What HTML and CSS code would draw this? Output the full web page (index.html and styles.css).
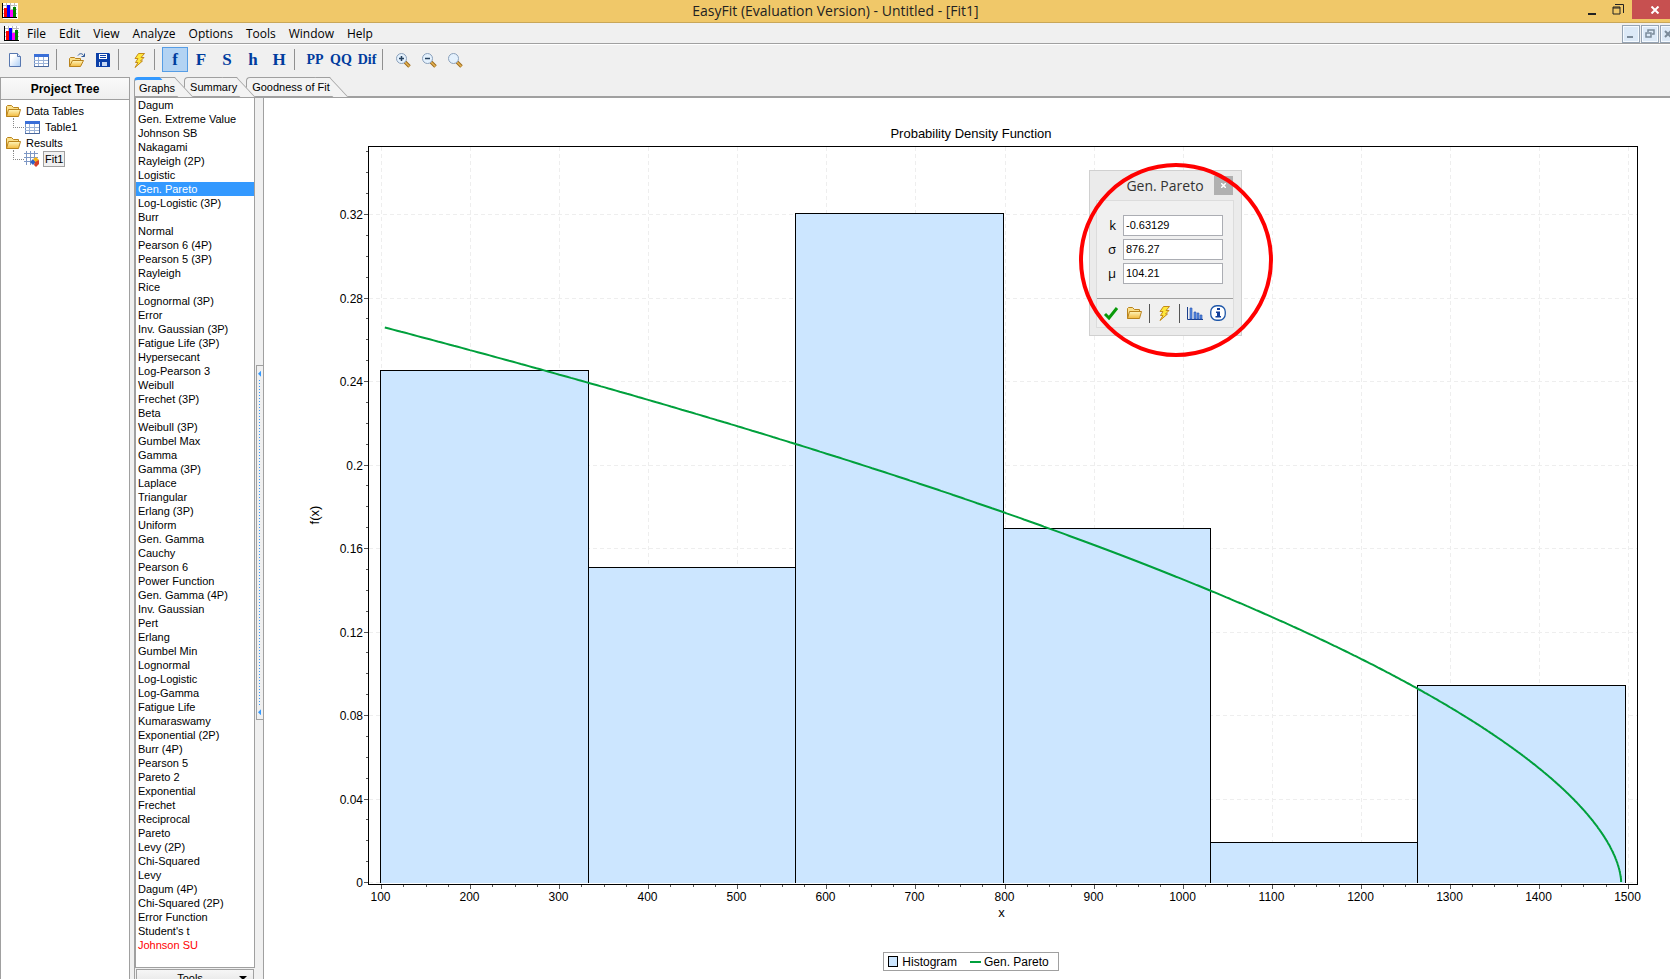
FILE: index.html
```
<!DOCTYPE html>
<html lang="en">
<head>
    <meta charset="UTF-8">
    <meta name="viewport" content="width=device-width, initial-scale=1.0">
    <title>EasyFit (Evaluation Version) - Untitled - [Fit1]</title>
    <link rel="stylesheet" href="styles.css">
</head>
<body>
    <!-- Shared icons -->
    <svg class="defs" aria-hidden="true">
        <defs>
            <linearGradient id="paper" x1="0" y1="0" x2="1" y2="1"><stop offset="0.3" stop-color="#fff"/><stop offset="1" stop-color="#a9ccf5"/></linearGradient>
            <linearGradient id="gold" x1="0" y1="0" x2="0" y2="1"><stop offset="0" stop-color="#fff6bd"/><stop offset="1" stop-color="#f2b93c"/></linearGradient>
            <symbol id="i-app" viewBox="0 0 16 16">
                <path d="M1 0h15v16H1z" fill="#fff"/>
                <path d="M1 2.500h14M1 6.500h14M1 10.500h14M4.500 0v14M8.500 0v14M12.500 0v14" stroke="#bbb"/>
                <path d="M2 5h3v9H2z" fill="#f00"/><path d="M5 2h3v12H5z" fill="#00f"/><path d="M8 7h3v7H8z" fill="#f0f"/><path d="M11 4h3v10h-3z" fill="#008000"/>
                <path d="M0 0h1v14h14v1H0z" fill="#000"/>
            </symbol>
            <symbol id="i-new" viewBox="0 0 16 16"><path d="M2.500 1.500h8l3 3v10h-11z" fill="url(#paper)" stroke="#5878b0"/><path d="M10.500 1.500v3h3" fill="#dfeaff" stroke="#5878b0"/></symbol>
            <symbol id="i-table" viewBox="0 0 16 16">
                <path d="M1.500 2.500h14v12h-14z" fill="#fff" stroke="#6f8fc4"/><path d="M1 2h15v3H1z" fill="#3a6fd8"/>
                <path d="M1 8.500h14M1 11.500h14M5.500 5v10M10.500 5v10" stroke="#9db4d8"/><path d="M1 14.500h14.500V5" fill="none" stroke="#49679c"/>
            </symbol>
            <symbol id="i-folder" viewBox="0 0 16 16">
                <path d="M1.500 13.500v-10l1-1h4l2 2h5v2" fill="#fbe08a" stroke="#b9831c"/>
                <path d="M1.500 13.500l2-7h12l-2 7z" fill="url(#gold)" stroke="#b9831c"/>
            </symbol>
            <symbol id="i-open" viewBox="0 0 18 16">
                <path d="M1.500 14.500v-8l1-1h4l1 1h5v2" fill="#fbe08a" stroke="#b9831c"/>
                <path d="M1.500 14.500l3-6h11l-3 6z" fill="url(#gold)" stroke="#b9831c"/>
                <path d="M10 3.500c2-3 5-2 6 1M13.500 4.500h3v-3" fill="none" stroke="#2c5796"/>
            </symbol>
            <symbol id="i-save" viewBox="0 0 16 16">
                <path d="M1 1h13l1 1v13H1z" fill="#0b3fa8"/><path d="M4 2h8v5H4z" fill="#fff"/><path d="M5 3.500h6M5 5.500h6" stroke="#0b3fa8"/>
                <path d="M4 10h8v4H4z" fill="#c9daf5"/><path d="M5 10h2v4H5z" fill="#0b3fa8"/>
            </symbol>
            <symbol id="i-bolt" viewBox="0 0 16 16"><path d="M7.500 1.500h6l-3.500 4h3l-3.500 3.500h2l-7.500 6.500 3-5h-2.500l2.500-4h-3z" fill="#ffe83b" stroke="#c48a1b"/></symbol>
            <symbol id="i-glass" viewBox="0 0 16 16">
                <path d="M10 10l4.500 4.500" stroke="#9c6a1c" stroke-width="3.500"/><path d="M10 10l4.500 4.500" stroke="#e5b456" stroke-width="1.500"/>
                <circle cx="6.500" cy="6.500" r="5" fill="#e4f1fd" stroke="#8aa0bb"/>
            </symbol>
            <symbol id="i-fit" viewBox="0 0 16 16">
                <path d="M1 1.500h12v12H1z" fill="#fff"/><path d="M0 2.500h14M0 6.500h14M0 10.500h9M2.500 0v14M6.500 0v14M10.500 0v8" stroke="#7d97c4"/>
                <path d="M6 11l3-3 3 3-3 3z" fill="#2e63c8"/><path d="M9 8l3-2 3 3-3 3z" fill="#f7b318"/><path d="M11 11l4-2v4l-3 3-2-2z" fill="#d5402b"/>
            </symbol>
            <symbol id="i-check" viewBox="0 0 16 16"><path d="M2 9l4 4 8-10" fill="none" stroke="#0a9a0a" stroke-width="3"/></symbol>
            <symbol id="i-bars" viewBox="0 0 16 16"><path d="M.5 2v12.500H16" fill="none" stroke="#1a3f8c"/><path d="M3 3h2v11H3zM7 7h2v7H7zM10 8h2v6h-2zM13 10h2v4h-2z" fill="#5c8ce0" stroke="#1f4fae" stroke-width=".6"/></symbol>
            <symbol id="i-info" viewBox="0 0 16 16"><rect x=".75" y=".75" width="14.500" height="14.500" rx="6" fill="#fff" stroke="#1d56a8" stroke-width="1.300"/><path d="M7 3h3v2H7zM6 6.500h4V11h1v1.500H5.500V11H7V8H6z" fill="#123f9a"/></symbol>
        </defs>
    </svg>

    <div class="app">
        <header class="titlebar">
            <svg class="icon"><use href="#i-app"/></svg>
            <h1>EasyFit (Evaluation Version) - Untitled - [Fit1]</h1>
            <div class="window-buttons">
                <button aria-label="Minimize"><svg width="12" height="12"><path d="M2 9h8v2H2z" fill="#222"/></svg></button>
                <button aria-label="Restore"><svg width="12" height="12"><path d="M3 .5h8.500V9M1 3h7v7H1zM1 4h7" fill="none" stroke="#222"/></svg></button>
                <button class="close" aria-label="Close"><svg width="10" height="8"><path d="M1.500 .5l7 7M8.500 .5l-7 7" stroke="#fff" stroke-width="2"/></svg></button>
            </div>
        </header>

        <nav class="menubar">
            <svg class="icon"><use href="#i-app"/></svg>
            <button>File</button>
            <button>Edit</button>
            <button>View</button>
            <button>Analyze</button>
            <button>Options</button>
            <button>Tools</button>
            <button>Window</button>
            <button>Help</button>
            <div class="mdi-buttons">
                <button aria-label="Minimize document"><svg width="10" height="10"><path d="M1 7h6v2H1z" fill="#7a8a9a"/></svg></button>
                <button aria-label="Restore document"><svg width="10" height="10"><path d="M3 3V1h6v4H7M1 4h5v4H1z" fill="none" stroke="#7a8a9a" stroke-width="1.500"/></svg></button>
                <button aria-label="Close document"><svg width="10" height="10"><path d="M1 2l6 6M7 2l-6 6" stroke="#7a8a9a" stroke-width="2"/></svg></button>
            </div>
        </nav>

        <div class="toolbar">
            <button aria-label="New"><svg class="icon"><use href="#i-new"/></svg></button>
            <button aria-label="New table"><svg class="icon"><use href="#i-table"/></svg></button>
            <span class="sep"></span>
            <button aria-label="Open"><svg class="icon wide"><use href="#i-open"/></svg></button>
            <button aria-label="Save"><svg class="icon"><use href="#i-save"/></svg></button>
            <span class="sep"></span>
            <button aria-label="Fit distributions"><svg class="icon"><use href="#i-bolt"/></svg></button>
            <span class="sep"></span>
            <button class="active">f</button>
            <button>F</button>
            <button>S</button>
            <button>h</button>
            <button>H</button>
            <span class="sep"></span>
            <button class="narrow">PP</button>
            <button class="narrow">QQ</button>
            <button class="narrow">Dif</button>
            <span class="sep"></span>
            <button aria-label="Zoom in"><svg class="icon" viewBox="0 0 16 16"><use href="#i-glass"/><path d="M4 6.500h5M6.500 4v5" stroke="#26425f" stroke-width="1.500"/></svg></button>
            <button aria-label="Zoom out"><svg class="icon" viewBox="0 0 16 16"><use href="#i-glass"/><path d="M4 6.500h5" stroke="#26425f" stroke-width="1.500"/></svg></button>
            <button aria-label="Reset zoom"><svg class="icon"><use href="#i-glass"/></svg></button>
        </div>

        <main class="workspace">
            <aside class="project">
                <h2>Project Tree</h2>
                <ul class="tree">
                    <li><svg class="icon"><use href="#i-folder"/></svg><span>Data Tables</span></li>
                    <li class="child"><svg class="icon"><use href="#i-table"/></svg><span>Table1</span></li>
                    <li><svg class="icon"><use href="#i-folder"/></svg><span>Results</span></li>
                    <li class="child"><svg class="icon"><use href="#i-fit"/></svg><span class="current">Fit1</span></li>
                </ul>
            </aside>

            <section class="document">
                <div class="tabs" role="tablist">
                    <button class="tab selected" role="tab" aria-selected="true">Graphs</button>
                    <button class="tab" role="tab">Summary</button>
                    <button class="tab" role="tab">Goodness of Fit</button>
                </div>

                <div class="page">
                    <div class="side">
                        <ul class="distributions">
                            <li>Dagum</li>
                            <li>Gen. Extreme Value</li>
                            <li>Johnson SB</li>
                            <li>Nakagami</li>
                            <li>Rayleigh (2P)</li>
                            <li>Logistic</li>
                            <li class="selected">Gen. Pareto</li>
                            <li>Log-Logistic (3P)</li>
                            <li>Burr</li>
                            <li>Normal</li>
                            <li>Pearson 6 (4P)</li>
                            <li>Pearson 5 (3P)</li>
                            <li>Rayleigh</li>
                            <li>Rice</li>
                            <li>Lognormal (3P)</li>
                            <li>Error</li>
                            <li>Inv. Gaussian (3P)</li>
                            <li>Fatigue Life (3P)</li>
                            <li>Hypersecant</li>
                            <li>Log-Pearson 3</li>
                            <li>Weibull</li>
                            <li>Frechet (3P)</li>
                            <li>Beta</li>
                            <li>Weibull (3P)</li>
                            <li>Gumbel Max</li>
                            <li>Gamma</li>
                            <li>Gamma (3P)</li>
                            <li>Laplace</li>
                            <li>Triangular</li>
                            <li>Erlang (3P)</li>
                            <li>Uniform</li>
                            <li>Gen. Gamma</li>
                            <li>Cauchy</li>
                            <li>Pearson 6</li>
                            <li>Power Function</li>
                            <li>Gen. Gamma (4P)</li>
                            <li>Inv. Gaussian</li>
                            <li>Pert</li>
                            <li>Erlang</li>
                            <li>Gumbel Min</li>
                            <li>Lognormal</li>
                            <li>Log-Logistic</li>
                            <li>Log-Gamma</li>
                            <li>Fatigue Life</li>
                            <li>Kumaraswamy</li>
                            <li>Exponential (2P)</li>
                            <li>Burr (4P)</li>
                            <li>Pearson 5</li>
                            <li>Pareto 2</li>
                            <li>Exponential</li>
                            <li>Frechet</li>
                            <li>Reciprocal</li>
                            <li>Pareto</li>
                            <li>Levy (2P)</li>
                            <li>Chi-Squared</li>
                            <li>Levy</li>
                            <li>Dagum (4P)</li>
                            <li>Chi-Squared (2P)</li>
                            <li>Error Function</li>
                            <li>Student's t</li>
                            <li class="failed">Johnson SU</li>
                        </ul>
                        <button class="tools"><span>Tools</span><i></i></button>
                    </div>

                    <div class="splitter"><div class="grip"></div></div>

                    <div class="chart">
                        <svg id="plot" role="img" aria-label="Probability Density Function"></svg>
                        <div class="legend">
                            <i class="swatch"></i><span>Histogram</span>
                            <i class="line"></i><span>Gen. Pareto</span>
                        </div>

                        <form class="params">
                            <div class="params-title">
                                <h3>Gen. Pareto</h3>
                                <button type="button" aria-label="Close"><svg width="5" height="5"><path d="M0 0l5 5M5 0L0 5" stroke="#fff" stroke-width="1.500"/></svg></button>
                            </div>
                            <div class="params-body">
                                <div class="fields">
                                    <label for="k">k</label><input type="text" id="k" value="-0.63129">
                                    <label for="sigma">σ</label><input type="text" id="sigma" value="876.27">
                                    <label for="mu">μ</label><input type="text" id="mu" value="104.21">
                                </div>
                                <div class="actions">
                                    <button type="button" aria-label="Apply"><svg class="icon"><use href="#i-check"/></svg></button>
                                    <button type="button" aria-label="Load"><svg class="icon"><use href="#i-folder"/></svg></button>
                                    <span class="bar"></span>
                                    <button type="button" aria-label="Fit"><svg class="icon"><use href="#i-bolt"/></svg></button>
                                    <span class="bar"></span>
                                    <button type="button" aria-label="Graph"><svg class="icon"><use href="#i-bars"/></svg></button>
                                    <button type="button" aria-label="Info"><svg class="icon"><use href="#i-info"/></svg></button>
                                </div>
                            </div>
                        </form>
                        <div class="marker"></div>
                    </div>
                </div>
            </section>
        </main>
    </div>

    <script src="chart.js"></script>
</body>
</html>
```

FILE: styles.css
```
* {
    box-sizing: border-box;
}

body {
    margin: 0;
    height: 100vh;
    overflow: hidden;
    background-color: #f0f0f0;
    color: #000;
    font-family: "Liberation Sans", Arial, sans-serif;
    font-size: 11px;
}

h1, h2, h3, ul {
    margin: 0;
    padding: 0;
    font-weight: normal;
    list-style: none;
}

button {
    padding: 0;
    border: none;
    background: none;
    color: inherit;
    font: inherit;
}

svg {
    display: block;
}

.defs {
    position: absolute;
    width: 0;
    height: 0;
}

.icon {
    width: 16px;
    height: 16px;
    flex: none;
}

.icon.wide {
    width: 18px;
}

/* the maximized window runs a few pixels past the screen */
.app {
    display: flex;
    flex-direction: column;
    width: calc(100% + 8px);
    height: calc(100vh + 8px);
}

/* Title bar */
.titlebar {
    display: flex;
    align-items: center;
    height: 23px;
    padding-left: 2px;
    flex: none;
    background-color: #f0c869;
    border-bottom: 1px solid #c9a759;
    font-family: "Open Sans", sans-serif;
}

.titlebar h1 {
    flex: 1;
    padding-left: 82px;
    padding-right: 8px;
    text-align: center;
    font-size: 14px;
    line-height: 22px;
    color: #222;
}

.window-buttons {
    display: flex;
    align-self: flex-start;
}

.window-buttons button {
    display: flex;
    justify-content: center;
    align-items: center;
    width: 26px;
    height: 19px;
}

.window-buttons .close {
    width: 46px;
    margin-left: 1px;
    background-color: #c75050;
}

/* Menu */
.menubar {
    display: flex;
    align-items: center;
    gap: 1px;
    height: 22px;
    padding-left: 4px;
    flex: none;
    border-bottom: 1px solid #fff;
    box-shadow: inset 0 -1px #a0a0a0;
    font-family: "Open Sans", sans-serif;
    font-size: 12px;
}

.menubar > button {
    padding: 0 6px;
    line-height: 20px;
}

.mdi-buttons {
    display: flex;
    gap: 1px;
    margin-left: auto;
}

.mdi-buttons button {
    display: flex;
    justify-content: center;
    align-items: center;
    width: 18px;
    height: 18px;
    border: 1px solid #95a3b3;
    background-color: #dce9f7;
    box-shadow: inset 0 0 0 1px #f5faff;
}

/* Toolbar */
.toolbar {
    display: flex;
    align-items: center;
    height: 32px;
    padding: 2px 2px 5px;
    flex: none;
}

.toolbar button {
    display: flex;
    justify-content: center;
    align-items: center;
    width: 26px;
    height: 25px;
    color: #003c9e;
    font: bold 17px "Liberation Serif", serif;
}

.toolbar .narrow {
    font-size: 14px;
}

.toolbar .active {
    border: 1px solid #569de5;
    background-color: #b3d3f3;
}

.sep {
    width: 10px;
    height: 21px;
    background: linear-gradient(#909090, #909090) 2px 0 / 1px 100% no-repeat;
}

/* Project tree */
.workspace {
    display: flex;
    flex: 1;
    gap: 4px;
    min-height: 0;
}

.project {
    width: 130px;
    flex: none;
    border: 1px solid #a0a0a0;
    background-color: #fff;
}

.project h2 {
    height: 22px;
    border-bottom: 1px solid #a0a0a0;
    background: linear-gradient(#fafafa, #efefef);
    font: bold 12px/22px "Liberation Sans", Arial, sans-serif;
    text-align: center;
}

.tree {
    padding: 3px 4px;
}

.tree li {
    display: flex;
    align-items: center;
    gap: 5px;
    height: 16px;
}

.tree .child::before {
    content: "";
    width: 10px;
    height: 9px;
    margin: 0 -5px 8px 8px;
    border-left: 1px dotted #888;
    border-bottom: 1px dotted #888;
}

.tree .current {
    height: 16px;
    margin-left: -2px;
    padding: 0 1px;
    border: 1px solid #a0a0a0;
    background-color: #f0f0f0;
    line-height: 14px;
}

/* Tabs */
.document {
    display: flex;
    flex-direction: column;
    flex: 1;
    min-width: 0;
}

.tabs {
    display: flex;
    height: 19px;
    flex: none;
}

.tab {
    position: relative;
    z-index: 1;
    margin-right: 9px;
    padding: 0 0 0 5px;
    border: 1px solid #a0a0a0;
    border-width: 1px 0 0 1px;
    border-top-left-radius: 4px;
    background-color: #f3f3f3;
}

.tab:nth-child(2) {
    z-index: 2;
}

/* slanted right edge, drawn over the next tab */
.tab::after {
    content: "";
    position: absolute;
    top: -1px;
    right: -9px;
    width: 14px;
    height: 19px;
    border-top: 1px solid #a0a0a0;
    border-right: 1px solid #a0a0a0;
    background-color: #f3f3f3;
    transform: skewX(43deg);
    z-index: -1;
}

.tab.selected {
    z-index: 3;
    padding-left: 4px;
    border-top: 3px solid #3399ff;
    line-height: 14px;
}

.tab.selected::after {
    top: -3px;
}

/* Page */
.page {
    display: flex;
    flex: 1;
    min-height: 0;
    border-top: 2px solid #a0a0a0;
}

.side {
    display: flex;
    flex-direction: column;
    gap: 1px;
    width: 121px;
    flex: none;
    border-left: 1px solid #a0a0a0;
}

.distributions {
    flex: 1;
    min-height: 0;
    border: 1px solid #a0a0a0;
    border-top: none;
    background-color: #fff;
    overflow: hidden;
}

.distributions li {
    height: 14px;
    padding-left: 2px;
    line-height: 14px;
    white-space: nowrap;
}

.distributions .selected {
    background-color: #3399ff;
    color: #fff;
}

.distributions .failed {
    color: #f00;
}

.tools {
    display: flex;
    align-items: center;
    height: 18px;
    margin: 0 1px;
    flex: none;
    border: 1px solid #a0a0a0;
    background: linear-gradient(#f6f6f6, #e4e4e4);
}

.tools span {
    flex: 1;
    padding-left: 4px;
}

.tools i {
    width: 8px;
    height: 4px;
    margin-right: 6px;
    background-color: #000;
    clip-path: polygon(0 0, 100% 0, 50% 100%);
}

.splitter {
    display: flex;
    flex-direction: column;
    justify-content: center;
    width: 9px;
    flex: none;
    padding-left: 1px;
    border-right: 1px solid #a0a0a0;
}

.grip {
    display: flex;
    flex-direction: column;
    justify-content: space-between;
    height: 40%;
    padding: 5px 0 4px 1px;
    border: 1px solid #a0a0a0;
    border-right: none;
    background: repeating-linear-gradient(#3399ff 0 1px, transparent 1px 3px) 2px 14px / 1px calc(100% - 28px) no-repeat;
}

.grip::before, .grip::after {
    content: "";
    width: 3px;
    height: 6px;
    background-color: #3399ff;
    clip-path: polygon(100% 0, 100% 100%, 0 50%);
}

/* Chart */
.chart {
    position: relative;
    display: flex;
    flex-direction: column;
    align-items: center;
    flex: 1;
    min-width: 0;
    padding-bottom: 16px;
    background-color: #fff;
}

#plot {
    width: 100%;
    flex: 1;
    min-height: 0;
    font-size: 12px;
}

#plot .title {
    font-size: 13px;
}

#plot .grid {
    stroke: #eee;
    stroke-dasharray: 4 3;
}

#plot .frame {
    fill: none;
    stroke: #000;
}

#plot .tick {
    stroke: #555;
}

#plot .bin {
    fill: #cce6ff;
}

#plot .edge {
    fill: none;
    stroke: #000;
}

#plot path, #plot rect {
    shape-rendering: crispEdges;
}

#plot .curve {
    fill: none;
    stroke: #00a03c;
    stroke-width: 2;
}

.legend {
    display: flex;
    align-items: center;
    height: 19px;
    padding: 0 9px 0 4px;
    flex: none;
    border: 1px solid #a0a0a0;
    font-size: 12px;
}

.swatch {
    width: 10px;
    height: 11px;
    margin-right: 4px;
    border: 1px solid #000;
    background-color: #cce6ff;
}

.line {
    width: 11px;
    height: 2px;
    margin: 0 3px 0 13px;
    background-color: #00a03c;
}

/* Parameters window */
.params {
    position: absolute;
    left: 825px;
    top: 72px;
    width: 153px;
    padding: 5px 7px 7px 6px;
    border: 1px solid #d0d0d0;
    background-color: #ebebeb;
}

.params-title {
    display: flex;
    align-items: flex-start;
    height: 24px;
    padding-right: 1px;
}

.params-title h3 {
    flex: 1;
    padding-left: 20px;
    font: 14px/20px "Open Sans", sans-serif;
    text-align: center;
    color: #333;
}

.params-title button {
    display: flex;
    justify-content: center;
    align-items: center;
    width: 19px;
    height: 19px;
    background-color: #b0b0b0;
}

.params-body {
    border: 1px solid #dcdcdc;
    background-color: #f0f0f0;
}

.fields {
    display: grid;
    grid-template-columns: 26px 100px;
    gap: 3px 0;
    padding: 14px 0;
    font-family: "Open Sans", sans-serif;
    font-size: 13px;
}

.fields label {
    padding-right: 7px;
    text-align: right;
    line-height: 21px;
}

.fields input {
    width: 100px;
    height: 21px;
    padding: 0 2px 2px;
    border: 1px solid #abadb3;
    background-color: #fff;
    font: 11px "Liberation Sans", Arial, sans-serif;
}

.actions {
    display: flex;
    justify-content: space-between;
    align-items: center;
    height: 29px;
    padding: 0 7px 0 6px;
    border-top: 1px solid #a0a0a0;
}

.bar {
    width: 1px;
    height: 19px;
    background-color: #555;
}

.marker {
    position: absolute;
    left: 815px;
    top: 65px;
    width: 194px;
    height: 194px;
    border: 4px solid #f00;
    border-radius: 50%;
    pointer-events: none;
}
```

FILE: chart.js
```
const bins = [0.2454, 0.1509, 0.3206, 0.1698, 0.0191, 0.0945];
const binStart = 99.4;
const binWidth = 232.8;
const params = { k: -0.63129, sigma: 876.27, mu: 104.21 };

const xMin = 85.4, xMax = 1510.1, yMax = 0.3526;
const plot = document.getElementById('plot');

function add(name, attrs, text) {
    const el = document.createElementNS('http://www.w3.org/2000/svg', name);
    for (const key in attrs) {
        el.setAttribute(key, attrs[key]);
    }
    if (text) {
        el.textContent = text;
    }
    plot.appendChild(el);
}

function density(x) {
    const z = Math.max(0, 1 + params.k * (x - params.mu) / params.sigma);
    return binWidth / params.sigma * Math.pow(z, -1 - 1 / params.k);
}

function draw() {
    plot.innerHTML = '';
    const left = 104, top = 48;
    const right = plot.clientWidth - 41;
    const bottom = plot.clientHeight - 68;
    const base = bottom - 2;

    const px = v => Math.round(left + (v - xMin) / (xMax - xMin) * (right - left));
    const py = v => Math.round(base - v / yMax * (base - top));
    const line = (cls, x1, y1, x2, y2) => add('path', { class: cls, d: `M${x1} ${y1}L${x2} ${y2}` });

    // Grid, ticks and labels
    for (let v = 100; v <= 1500; v += 25) {
        const x = px(v) + 0.5;
        const major = v % 100 === 0;
        line('tick', x, bottom + 1, x, bottom + (major ? 5 : 3));
        if (major) {
            line('grid', x, top + 1, x, bottom);
            add('text', { x: x - 1, y: bottom + 17, 'text-anchor': 'middle' }, String(v));
        }
    }
    for (let i = 0; i <= 35; i++) {
        const y = py(i / 100) + 0.5;
        const major = i % 4 === 0;
        line('tick', left - (major ? 4 : 2), y, left, y);
        if (major) {
            line('grid', left + 1, y, right, y);
            add('text', { x: left - 5, y: y + 4, 'text-anchor': 'end' }, String(i / 100));
        }
    }

    // Histogram
    bins.forEach((value, i) => {
        const x1 = px(binStart + i * binWidth);
        const x2 = px(binStart + (i + 1) * binWidth);
        const y = py(value);
        add('rect', { class: 'bin', x: x1, y: y, width: x2 - x1, height: base + 1 - y });
        add('path', { class: 'edge', d: `M${x1 + 0.5} ${base + 1}V${y + 0.5}H${x2 + 0.5}V${base + 1}` });
    });

    // Fitted density
    const end = params.mu - params.sigma / params.k;
    const points = [];
    for (let i = 0; i <= 600; i++) {
        const v = params.mu + (end - params.mu) * (1 - Math.pow(1 - i / 600, 2));
        const x = left + (v - xMin) / (xMax - xMin) * (right - left);
        const y = base - density(v) / yMax * (base - top);
        points.push(x.toFixed(1) + ',' + y.toFixed(1));
    }
    add('polyline', { class: 'curve', points: points.join(' ') });

    add('rect', { class: 'frame', x: left + 0.5, y: top + 0.5, width: right - left, height: bottom - top });

    // Titles
    const cx = (left + right) / 2;
    const cy = (top + bottom) / 2;
    add('text', { class: 'title', x: plot.clientWidth / 2, y: top - 8, 'text-anchor': 'middle' }, 'Probability Density Function');
    add('text', { class: 'title', x: cx - 1, y: bottom + 33, 'text-anchor': 'middle' }, 'x');
    add('text', { class: 'title', transform: `translate(55 ${cy}) rotate(-90)`, 'text-anchor': 'middle' }, 'f(x)');
}

draw();
window.addEventListener('resize', draw);
```
